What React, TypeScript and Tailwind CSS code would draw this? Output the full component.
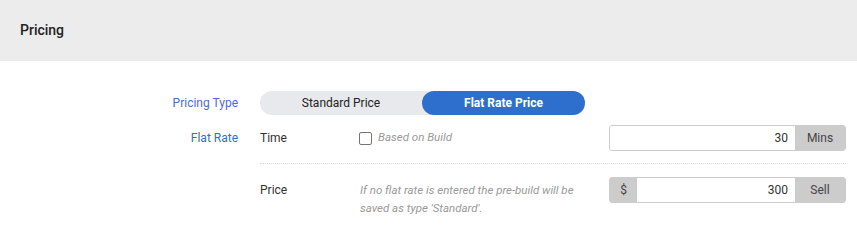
export default function App() {
  return (
    <div className="w-[857px] h-[227px] bg-white font-['Roboto','Liberation_Sans',sans-serif] overflow-hidden">
      <div className="h-[61px] bg-[#ececec] px-5 flex items-center">
        <h2 className="text-[14px] font-medium text-[#222]">Pricing</h2>
      </div>

      <div className="pt-[30px] pr-[11px]">
        {/* pricing type */}
        <div className="flex items-center">
          <div className="w-[238px] text-right text-[12px] text-[#4d6bd2]">Pricing Type</div>
          <div className="ml-[22px] w-[325px] h-6 rounded-full bg-[#e8e9ed] flex text-[12px]">
            <button className="w-[162px] h-6 rounded-full text-[#222]">Standard Price</button>
            <button className="flex-1 h-6 rounded-full bg-[#2e6fce] font-bold text-white">Flat Rate Price</button>
          </div>
        </div>

        {/* time */}
        <div className="flex items-center mt-[10px] h-[26px]">
          <div className="w-[238px] text-right text-[12px] text-[#2f6fd0]">Flat Rate</div>
          <div className="ml-[22px] flex-1 flex items-center">
            <div className="w-[99px] text-[12px] text-[#333]">Time</div>
            <label className="flex items-center gap-[6px] flex-1">
              <span className="w-[13px] h-[13px] border border-[#767676] rounded-[2px] bg-white" />
              <span className="text-[11.5px] italic text-[#999]">Based on Build</span>
            </label>
            <div className="w-[237px] h-[26px] flex border border-[#ccc] rounded-[3px] overflow-hidden">
              <input
                readOnly
                value="30"
                className="flex-1 min-w-0 text-right pr-[7px] text-[12px] text-[#333] outline-none bg-white"
              />
              <span className="w-[50px] bg-[#cccccc] flex items-center justify-center text-[12px] text-[#444]">Mins</span>
            </div>
          </div>
        </div>

        <div className="ml-[260px] mt-3 border-t border-dotted border-[#ddd]" />

        {/* price */}
        <div className="flex items-start mt-[13px]">
          <div className="w-[238px]" />
          <div className="ml-[22px] flex-1 flex items-start">
            <div className="w-[100px] mt-[4px] leading-[18px] text-[12px] text-[#333]">Price</div>
            <p className="flex-1 mt-[4px] leading-[18px] text-[11.5px] italic text-[#999] pr-6">
              If no flat rate is entered the pre-build will be saved as type 'Standard'.
            </p>
            <div className="w-[237px] h-[26px] flex border border-[#ccc] rounded-[3px] overflow-hidden bg-[#cccccc]">
              <span className="w-[27px] flex items-center justify-center text-[12px] text-[#444]">$</span>
              <input
                readOnly
                value="300"
                className="flex-1 min-w-0 text-right pr-[7px] text-[12px] text-[#333] outline-none bg-white"
              />
              <span className="w-[50px] flex items-center justify-center text-[12px] text-[#444]">Sell</span>
            </div>
          </div>
        </div>
      </div>
    </div>
  );
}
